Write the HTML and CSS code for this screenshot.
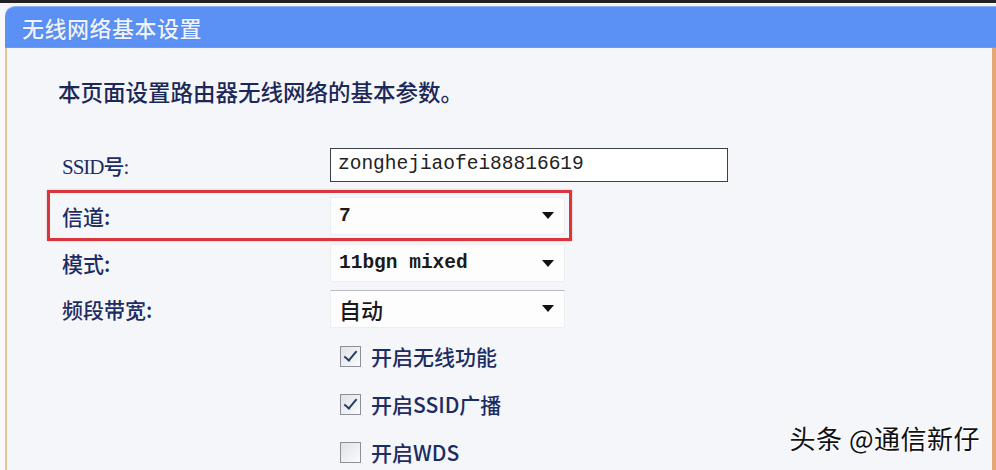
FILE: index.html
```html
<!DOCTYPE html>
<html lang="zh-CN">
<head>
    <meta charset="UTF-8">
    <title>无线网络基本设置</title>
    <link rel="stylesheet" href="styles.css">
</head>
<body>
    <div class="topbar"></div>

    <div class="panel">
        <div class="panel-header">无线网络基本设置</div>

        <div class="panel-body">
            <p class="intro">本页面设置路由器无线网络的基本参数。</p>

            <div class="form">
                <div class="row row-ssid">
                    <span class="label">SSID号:</span>
                    <div class="text-input">zonghejiaofei88816619</div>
                </div>

                <div class="row row-channel highlight">
                    <span class="label">信道:</span>
                    <div class="select"><span>7</span><i class="arrow"></i></div>
                </div>

                <div class="row row-mode">
                    <span class="label">模式:</span>
                    <div class="select"><span>11bgn mixed</span><i class="arrow"></i></div>
                </div>

                <div class="row row-band">
                    <span class="label">频段带宽:</span>
                    <div class="select select-cn"><span>自动</span><i class="arrow"></i></div>
                </div>

                <div class="row row-check">
                    <span></span>
                    <label class="check"><span class="box checked"></span>开启无线功能</label>
                </div>

                <div class="row row-check">
                    <span></span>
                    <label class="check"><span class="box checked"></span>开启SSID广播</label>
                </div>

                <div class="row row-check">
                    <span></span>
                    <label class="check"><span class="box"></span>开启WDS</label>
                </div>
            </div>
        </div>
    </div>

    <div class="watermark">头条 @通信新仔</div>
</body>
</html>
```

FILE: styles.css
```css
:root {
    --header: #5b90f5;
    --panel-bg: #f5f6f9;
    --navy: #1d2c62;
    --red: #d8353c;
    --cn: "Noto Sans CJK SC", "Noto Sans", sans-serif;
    --mono: "Liberation Mono", "DejaVu Sans Mono", monospace;
}

html, body {
    height: 100%;
}

body {
    margin: 0;
    background: #f7f8fa;
    font-family: var(--cn);
    color: var(--navy);
    overflow: hidden;
    position: relative;
}

.topbar {
    height: 3px;
    background: #222;
    border-bottom: 3px solid #f4f6fa;
}

.panel {
    margin: 0 0 0 5px;
    height: 464px;
    display: flex;
    flex-direction: column;
}

.panel-header {
    height: 46px;
    background: var(--header);
    border-top: 1px solid #8fb3f8;
    border-bottom: 1px solid #6f98e8;
    border-radius: 10px 0 0 0;
    color: #eef3ff;
    font-size: 22px;
    font-weight: 500;
    line-height: 40px;
    padding-left: 17px;
    letter-spacing: 0.5px;
    box-sizing: border-box;
    text-shadow: 0 0 1px rgba(60, 90, 160, 0.6);
}

.panel-body {
    flex: 1;
    background: var(--panel-bg);
    border-left: 2px solid #e4c596;
    border-right: 4px solid #e6a777;
}

.intro {
    margin: 27px 0 0 51px;
    font-size: 22.5px;
    font-weight: 500;
    line-height: 32px;
    color: #1b2858;
}

.form {
    margin: 34px 0 0 40px;
    width: 525px;
}

.row {
    display: grid;
    grid-template-columns: 268px auto;
    align-items: center;
    padding-left: 15px;
    box-sizing: border-box;
}

.label {
    font-size: 21px;
    font-weight: 500;
    color: var(--navy);
}

.row-ssid {
    height: 49px;
    padding-bottom: 2px;
}

.row-ssid .label {
    font-family: "Liberation Serif", var(--cn);
    letter-spacing: -1px;
}

.text-input {
    width: 398px;
    height: 34px;
    box-sizing: border-box;
    border: 1px solid #3a3f48;
    background: #fff;
    font-family: var(--mono);
    font-size: 19.5px;
    line-height: 31px;
    padding-left: 7px;
    color: #222;
    white-space: nowrap;
}

.highlight {
    height: 51px;
    border: 3px solid var(--red);
    padding-left: 12px;
    grid-template-columns: 268px 235px;
    box-shadow: 0 0 2px rgba(216, 53, 60, 0.35);
}

.row-mode {
    height: 44px;
}

.row-band {
    height: 47px;
}

.row-check {
    height: 48px;
}

.select {
    width: 235px;
    height: 38px;
    box-sizing: border-box;
    background: #fdfdfe;
    border: 1px solid #eceef2;
    display: flex;
    align-items: center;
    justify-content: space-between;
    padding: 0 10px 0 8px;
    font-family: var(--mono);
    font-size: 19.5px;
    font-weight: bold;
    color: #1a1a1a;
}

.select-cn {
    border-top: 1px solid #b9bcc2;
    font-family: var(--cn);
    font-size: 22px;
    font-weight: 500;
}

.arrow {
    width: 0;
    height: 0;
    border-left: 6px solid transparent;
    border-right: 6px solid transparent;
    border-top: 7px solid #111;
}

.check {
    display: flex;
    align-items: center;
    gap: 10px;
    font-size: 21px;
    font-weight: 500;
    color: var(--navy);
    margin-left: 10px;
}

.box {
    width: 19px;
    height: 19px;
    border: 1px solid #8d9097;
    background: linear-gradient(135deg, #dfe2e8, #fbfbfc);
    position: relative;
}

.box.checked::after {
    content: "";
    position: absolute;
    left: 6px;
    top: 1px;
    width: 5px;
    height: 11px;
    border-right: 2px solid #2b3a66;
    border-bottom: 2px solid #2b3a66;
    transform: rotate(40deg);
}

.watermark {
    position: absolute;
    right: 16px;
    bottom: 14px;
    font-size: 26px;
    color: #111;
    letter-spacing: 0.5px;
    text-shadow: 1px 1px 0 #fff, -1px -1px 0 #fff;
}
```
